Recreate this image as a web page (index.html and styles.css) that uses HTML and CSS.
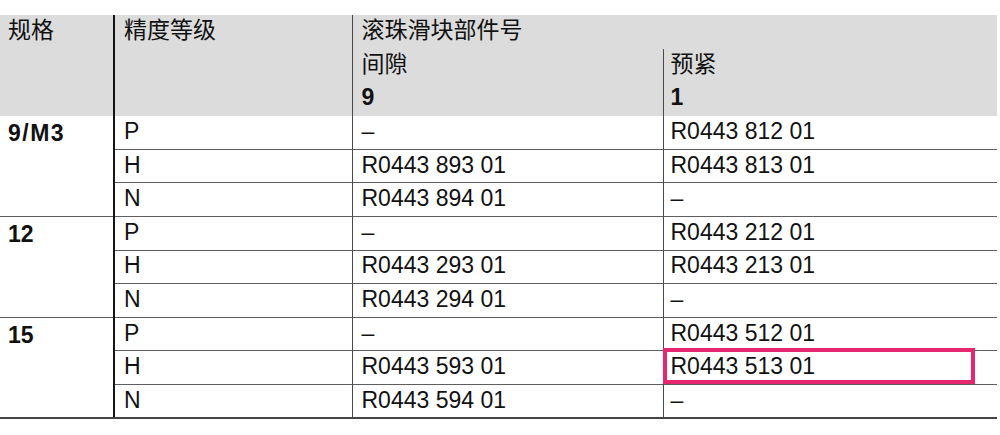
FILE: index.html
```html
<!DOCTYPE html>
<html lang="zh">
<head>
<meta charset="utf-8">
<title>滚珠滑块部件号</title>
<link rel="stylesheet" href="styles.css">
</head>
<body>
<table class="spec">
  <colgroup>
    <col class="c1"><col class="c2"><col class="c3"><col class="c4">
  </colgroup>
  <thead>
    <tr>
      <th rowspan="3" class="size">规格</th>
      <th rowspan="3" class="grade">精度等级</th>
      <th colspan="2" class="part">滚珠滑块部件号</th>
    </tr>
    <tr>
      <th class="part">间隙</th>
      <th class="pre">预紧</th>
    </tr>
    <tr>
      <th class="part num">9</th>
      <th class="pre num">1</th>
    </tr>
  </thead>
  <tbody>
    <tr class="grp">
      <td rowspan="3" class="size wide">9/M3</td>
      <td class="grade">P</td><td class="part">–</td><td class="pre">R0443 812 01</td>
    </tr>
    <tr><td class="grade">H</td><td class="part">R0443 893 01</td><td class="pre">R0443 813 01</td></tr>
    <tr><td class="grade">N</td><td class="part">R0443 894 01</td><td class="pre">–</td></tr>
    <tr class="grp">
      <td rowspan="3" class="size">12</td>
      <td class="grade">P</td><td class="part">–</td><td class="pre">R0443 212 01</td>
    </tr>
    <tr><td class="grade">H</td><td class="part">R0443 293 01</td><td class="pre">R0443 213 01</td></tr>
    <tr><td class="grade">N</td><td class="part">R0443 294 01</td><td class="pre">–</td></tr>
    <tr class="grp">
      <td rowspan="3" class="size">15</td>
      <td class="grade">P</td><td class="part">–</td><td class="pre">R0443 512 01</td>
    </tr>
    <tr><td class="grade">H</td><td class="part">R0443 593 01</td><td class="pre mark">R0443 513 01<span class="highlight"></span></td></tr>
    <tr class="last"><td class="grade">N</td><td class="part">R0443 594 01</td><td class="pre">–</td></tr>
  </tbody>
</table>
</body>
</html>
```
FILE: styles.css
```css
html, body {
  margin: 0;
  padding: 0;
  background: #ffffff;
}
body {
  padding-top: 15px;
  font-family: "Liberation Sans", "Noto Sans CJK SC", sans-serif;
  font-size: 23px;
  color: #111111;
}
.spec {
  border-collapse: collapse;
  table-layout: fixed;
  width: 997px;
}
.c1 { width: 114px; }
.c2 { width: 238px; }
.c3 { width: 311px; }
.c4 { width: 334px; }

.spec th,
.spec td {
  padding: 0 0 2px 8px;
  line-height: 1;
  text-align: left;
  vertical-align: middle;
  white-space: nowrap;
  overflow: visible;
}
.spec tr { height: 33.6px; }

.spec th {
  background: #dcdcdc;
  font-weight: normal;
}
.spec th.num { font-weight: bold; }
.spec thead th.size,
.spec thead th.grade { vertical-align: top; padding-top: 4px; }

.spec .size { padding-left: 8px; }
.spec td.size {
  vertical-align: top;
  padding-top: 6px;
  font-weight: bold;
}
.spec td.wide { letter-spacing: 1.5px; }
.spec .grade {
  border-left: 2px solid #151515;
  padding-left: 9px;
}
.spec .part {
  border-left: 1.5px solid #4a4a4a;
  padding-left: 9px;
}
.spec .pre {
  border-left: 1.5px solid #4a4a4a;
  padding-left: 7px;
}

.spec tbody td {
  border-top: 1.5px solid #5e5e5e;
}
.spec tbody tr:first-child td { border-top: none; }
.spec tbody tr.last td { border-bottom: 2px solid #444444; }
.spec tbody tr:nth-child(7) td.size { border-bottom: 2px solid #444444; }

.mark { position: relative; }
.highlight {
  position: absolute;
  left: -1px;
  top: -3px;
  width: 312px;
  height: 36px;
  box-sizing: border-box;
  border: 4px solid #e5286e;
}
```
